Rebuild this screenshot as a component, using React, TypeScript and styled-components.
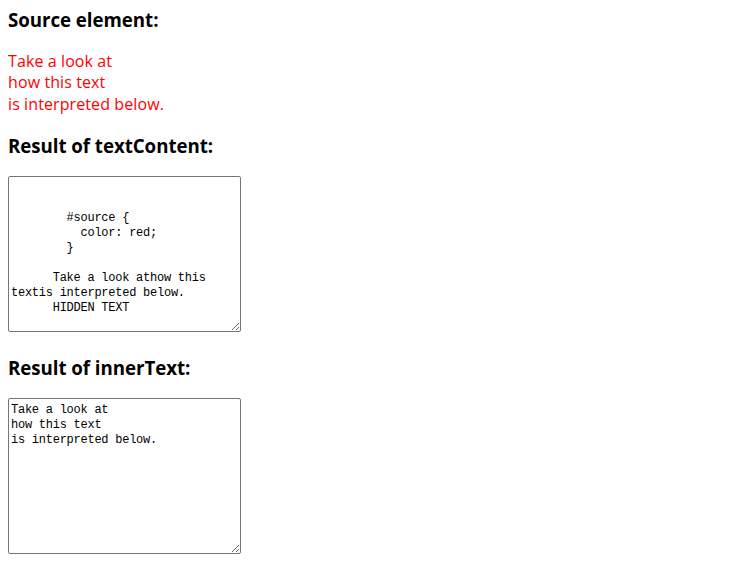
import React from 'react'
import styled, { createGlobalStyle } from 'styled-components'

const GlobalStyle = createGlobalStyle`
    html, body {
        margin: 0;
        padding: 0;
        background: #fff;
    }
    body {
        font-family: "Open Sans", "Noto Sans", sans-serif;
        color: #000;
    }
`

const textContentValue = `

        #source {
          color: red;
        }

      Take a look athow this
textis interpreted below.
      HIDDEN TEXT
    `

const innerTextValue = `Take a look at
how this text
is interpreted below.`

const App = () => {
    return (
        <Page>
            <GlobalStyle />
            <Heading>Source element:</Heading>
            <Source>
                Take a look at<br />
                how this text<br />
                is interpreted below.
            </Source>
            <Heading $gap={19}>Result of textContent:</Heading>
            <Output readOnly value={textContentValue} />
            <Heading $gap={24}>Result of innerText:</Heading>
            <Output readOnly value={innerTextValue} />
        </Page>
    )
}

const Page = styled.div`
    display: flex;
    flex-direction: column;
    align-items: flex-start;
    padding: 8px;
`

const Heading = styled.h3<{ $gap?: number }>`
    margin: ${p => p.$gap ?? 0}px 0 0;
    font-size: 18.72px;
    font-weight: 700;
    line-height: 24px;
    letter-spacing: -0.05px;
`

const Source = styled.div`
    margin-top: 19px;
    color: #ff0000;
    font-size: 16px;
    line-height: 21.33px;
    letter-spacing: 0.1px;
`

const Output = styled.textarea`
    display: block;
    box-sizing: border-box;
    margin-top: 18px;
    width: 233px;
    height: 156px;
    padding: 4px 2px 0;
    border: 1px solid #767676;
    border-radius: 2px;
    font-family: "Liberation Mono", "DejaVu Sans Mono", monospace;
    font-size: 12px;
    letter-spacing: -0.25px;
    line-height: 15px;
    color: #000;
    background: #fff;
    white-space: pre;
    overflow: hidden;
    outline: none;
`

export default App
